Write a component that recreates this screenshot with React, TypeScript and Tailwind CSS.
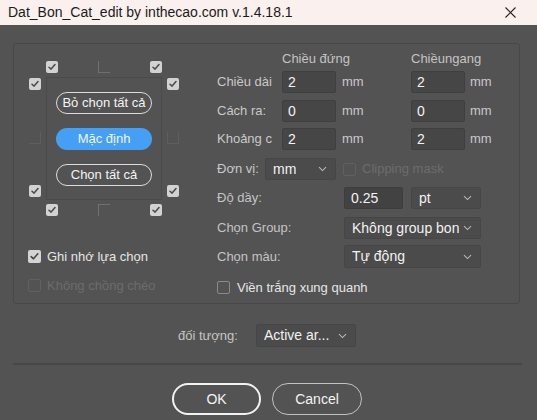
import type { ReactNode } from 'react';

const font = { fontFamily: '"Liberation Sans", Arial, sans-serif' };

const Check = ({ on = true, dim = false }: { on?: boolean; dim?: boolean }) => {
  if (!on) {
    return (
      <span
        className={`block w-[13px] h-[13px] rounded-[2px] border ${dim ? 'border-[#606060]' : 'border-[#8a8a8a]'}`}
      />
    );
  }
  return (
    <span className="flex w-[13px] h-[13px] items-center justify-center rounded-[2px] bg-[#d4d4d4]">
      <svg width="9" height="9" viewBox="0 0 9 9" fill="none">
        <path d="M1.2 4.6 L3.5 6.8 L7.8 1.8" stroke="#4a4a4a" strokeWidth="1.6" strokeLinecap="round" strokeLinejoin="round" />
      </svg>
    </span>
  );
};

// small ticked box used around the cut-mark preview
const Mark = () => (
  <span className="flex w-[12px] h-[12px] items-center justify-center rounded-[2px] bg-[#d2d2d2]">
    <svg width="8" height="8" viewBox="0 0 8 8" fill="none">
      <path d="M1 4.2 L3.1 6.1 L7 1.6" stroke="#4a4a4a" strokeWidth="1.5" strokeLinecap="round" strokeLinejoin="round" />
    </svg>
  </span>
);

const Chevron = () => (
  <svg width="9" height="6" viewBox="0 0 9 6" fill="none">
    <path d="M1 1.2 L4.5 4.6 L8 1.2" stroke="#b8b8b8" strokeWidth="1.1" />
  </svg>
);

const Field = ({ value, w }: { value: string; w: string }) => (
  <div className={`${w} h-[22px] flex items-center pl-[5px] bg-[#464646] border border-[#3f3f3f] rounded-[2px] text-[14px] text-[#f2f2f2]`}>
    {value}
  </div>
);

const Select = ({ value, w, h = 'h-[22px]' }: { value: string; w: string; h?: string }) => (
  <div className={`${w} ${h} flex items-center justify-between pl-[7px] pr-[8px] bg-[#4b4b4b] border border-[#464646] rounded-[2px] text-[14px] text-[#f2f2f2]`}>
    <span className="whitespace-nowrap overflow-hidden">{value}</span>
    <Chevron />
  </div>
);

const Pill = ({ children, active = false }: { children: ReactNode; active?: boolean }) => (
  <div
    className={`w-[96px] h-[22px] flex items-center justify-center rounded-full text-[13px] text-[#f4f4f4] ${
      active ? 'bg-[#45a0f5]' : 'border-[1.5px] border-[#dcdcdc]'
    }`}
  >
    {children}
  </div>
);

const SizeRow = ({ label, a, b, mt }: { label: string; a: string; b: string; mt: string }) => (
  <div className={`flex items-center ${mt}`}>
    <span className="w-[65px] text-[13px] text-[#c9c9c9] whitespace-nowrap">{label}</span>
    <Field value={a} w="w-[54px]" />
    <span className="w-[75px] pl-[6px] text-[13px] text-[#c9c9c9]">mm</span>
    <Field value={b} w="w-[54px]" />
    <span className="pl-[5px] text-[13px] text-[#c9c9c9]">mm</span>
  </div>
);

export default function App() {
  return (
    <div className="w-[537px] h-[420px] bg-[#535353] overflow-hidden flex flex-col" style={font}>
      {/* title bar */}
      <div className="h-[25px] bg-[#faf0ee] flex items-center justify-between pl-[8px] pr-[21px]">
        <span className="text-[14px] text-[#1b1b1b]">Dat_Bon_Cat_edit by inthecao.com v.1.4.18.1</span>
        <svg width="11" height="11" viewBox="0 0 11 11">
          <path d="M0.5 0.5 L10.5 10.5 M10.5 0.5 L0.5 10.5" stroke="#222" strokeWidth="1.1" />
        </svg>
      </div>

      <div className="pl-[13px] pt-[18px]">
        <div className="w-[507px] h-[261px] border border-[#484848] rounded-[3px] flex">
          {/* cut mark picker */}
          <div className="w-[203px] pl-[15px] pt-[17px]">
            <div className="grid grid-cols-[12px_5px_12px_40px_12px_40px_12px_5px_12px] grid-rows-[11px_6px_12px_42px_12px_41px_12px_7px_12px]">
              <div className="col-start-3 row-start-1"><Mark /></div>
              <div className="col-start-5 row-start-1 w-[12px] h-[12px] border-l border-b border-[#707070]" />
              <div className="col-start-7 row-start-1"><Mark /></div>

              <div className="col-start-1 row-start-3"><Mark /></div>
              <div className="col-start-9 row-start-3"><Mark /></div>

              <div className="col-start-3 col-end-8 row-start-3 row-end-8 -mt-[1px] -mb-[3px] border border-[#4a4a4a] flex flex-col items-center justify-center gap-[14px]">
                <Pill>Bỏ chọn tất cả</Pill>
                <Pill active>Mặc định</Pill>
                <Pill>Chọn tất cả</Pill>
              </div>

              <div className="col-start-1 row-start-5 w-[12px] h-[12px] border-r border-b border-[#5e5e5e]" />
              <div className="col-start-9 row-start-5 w-[12px] h-[12px] border-l border-r border-b border-[#5e5e5e]" />

              <div className="col-start-1 row-start-7"><Mark /></div>
              <div className="col-start-9 row-start-7"><Mark /></div>

              <div className="col-start-3 row-start-9"><Mark /></div>
              <div className="col-start-5 row-start-9 w-[12px] h-[12px] border-l border-t border-[#707070]" />
              <div className="col-start-7 row-start-9"><Mark /></div>
            </div>

            <div className="flex items-center gap-[6px] mt-[31px] -ml-[1px]">
              <Check />
              <span className="text-[13px] text-[#e6e6e6]">Ghi nhớ lựa chọn</span>
            </div>
            <div className="flex items-center gap-[6px] mt-[9px] -ml-[1px]">
              <Check on={false} dim />
              <span className="text-[13px] text-[#6c6c6c]">Không chồng chéo</span>
            </div>
          </div>

          {/* sizes and options */}
          <div className="flex-1 pt-[7px]">
            <div className="flex text-[13px] text-[#c4c4c4] h-[16px] items-center">
              <span className="pl-[65px] w-[194px]">Chiều đứng</span>
              <span>Chiềungang</span>
            </div>
            <SizeRow label="Chiều dài" a="2" b="2" mt="mt-[4px]" />
            <SizeRow label="Cách ra:" a="0" b="0" mt="mt-[7px]" />
            <SizeRow label="Khoảng c" a="2" b="2" mt="mt-[6px]" />

            <div className="flex items-center mt-[8px]">
              <span className="w-[48px] text-[13px] text-[#c9c9c9]">Đơn vị:</span>
              <Select value="mm" w="w-[71px]" />
              <div className="ml-[7px] flex items-center gap-[6px]">
                <Check on={false} dim />
                <span className="text-[13px] text-[#6c6c6c]">Clipping mask</span>
              </div>
            </div>

            <div className="flex items-center mt-[7px]">
              <span className="w-[127px] text-[13px] text-[#c4c4c4]">Độ dầy:</span>
              <div className="w-[59px] h-[22px] flex items-center pl-[6px] bg-[#424242] border border-[#3d3d3d] rounded-[2px] text-[14px] text-[#f2f2f2]">
                0.25
              </div>
              <div className="ml-[8px]">
                <Select value="pt" w="w-[70px]" />
              </div>
            </div>

            <div className="flex items-center mt-[8px]">
              <span className="w-[127px] text-[13px] text-[#c4c4c4]">Chọn Group:</span>
              <Select value="Không group bon" w="w-[137px]" />
            </div>

            <div className="flex items-center mt-[6px]">
              <span className="w-[127px] text-[13px] text-[#c4c4c4]">Chọn màu:</span>
              <Select value="Tự động" w="w-[137px]" h="h-[23px]" />
            </div>

            <div className="flex items-center gap-[7px] mt-[10px]">
              <Check on={false} />
              <span className="text-[13px] text-[#e6e6e6]">Viền trắng xung quanh</span>
            </div>
          </div>
        </div>

        {/* target */}
        <div className="flex items-center mt-[20px] pl-[165px]">
          <span className="w-[78px] text-[13px] text-[#c4c4c4]">đối tượng:</span>
          <Select value="Active ar..." w="w-[100px]" h="h-[23px]" />
        </div>

        <div className="w-[509px] h-[2px] bg-[#474747] mt-[16px]" />

        <div className="flex gap-[11px] mt-[18px] pl-[159px]">
          <div className="w-[89px] h-[32px] flex items-center justify-center rounded-full border-2 border-[#f2f2f2] text-[14px] text-[#f4f4f4]">
            OK
          </div>
          <div className="w-[90px] h-[32px] flex items-center justify-center rounded-full border-[1.5px] border-[#c2c2c2] text-[14px] text-[#f4f4f4]">
            Cancel
          </div>
        </div>
      </div>
    </div>
  );
}
